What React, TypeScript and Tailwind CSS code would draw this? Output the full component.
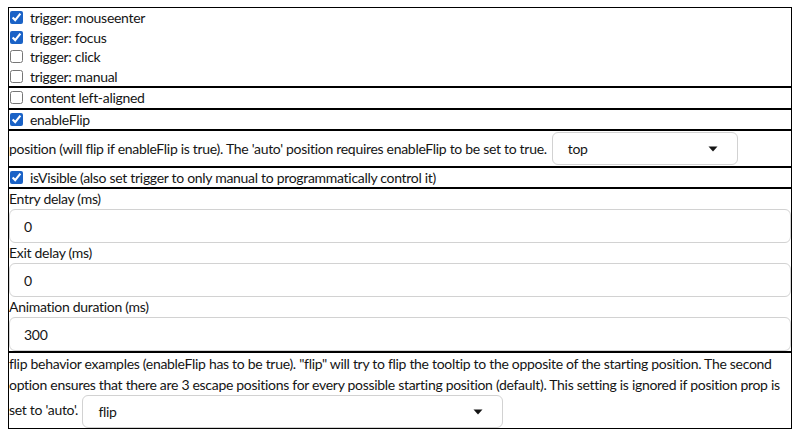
const font = "font-['Lato',sans-serif]";

function Check({ label, checked, h = "h-[19.5px]" }: { label: string; checked?: boolean; h?: string }) {
  return (
    <label className={`flex items-center ${h}`}>
      <input
        type="checkbox"
        defaultChecked={checked}
        className="m-0 ml-px mr-[7px] h-[13px] w-[13px] accent-[#1a62c6]"
      />
      <span>{label}</span>
    </label>
  );
}

function Caret() {
  return (
    <svg width="10" height="6" viewBox="0 0 10 6" className="shrink-0">
      <path d="M0.5 0.5h9L5 5.5z" fill="#151515" />
    </svg>
  );
}

function Select({ value, width }: { value: string; width: string }) {
  return (
    <span
      className={`inline-flex items-center justify-between rounded-md border border-[#d2d2d2] bg-white pl-[15px] pr-[19px] align-middle ${width}`}
    >
      <span>{value}</span>
      <Caret />
    </span>
  );
}

function NumberField({ label, value }: { label: string; value: string }) {
  return (
    <div>
      <div className="h-5 leading-5">{label}</div>
      <div className="flex h-[34px] items-center rounded-md border border-[#d2d2d2] pl-[14px]">
        {value}
      </div>
    </div>
  );
}

export default function App() {
  return (
    <div
      className={`min-h-screen bg-white pt-[7px] pl-2 text-[14px] tracking-[-0.3px] text-[#151515] ${font}`}
    >
      <div className="w-[784px]">
        <div className="border border-black">
          <Check label="trigger: mouseenter" checked />
          <Check label="trigger: focus" checked />
          <Check label="trigger: click" />
          <Check label="trigger: manual" />
        </div>
        <div className="border border-black">
          <Check label="content left-aligned" />
        </div>
        <div className="border border-black">
          <Check label="enableFlip" checked />
        </div>
        <div className="flex items-center gap-[5px] border border-black py-px">
          <span className="whitespace-nowrap">
            position (will flip if enableFlip is true). The 'auto' position requires enableFlip to be set
            to true.
          </span>
          <Select value="top" width="h-[33px] w-[186px] shrink-0" />
        </div>
        <div className="border border-black">
          <Check
            label="isVisible (also set trigger to only manual to programmatically control it)"
            checked
            h="h-[19px]"
          />
        </div>
        <div className="border border-black">
          <NumberField label="Entry delay (ms)" value="0" />
          <NumberField label="Exit delay (ms)" value="0" />
          <NumberField label="Animation duration (ms)" value="300" />
        </div>
        <div className="whitespace-nowrap border border-black leading-[21px]">
          flip behavior examples (enableFlip has to be true). "flip" will try to flip the tooltip to the
          opposite of the starting position. The second
          <br />
          option ensures that there are 3 escape positions for every possible starting position
          (default). This setting is ignored if position prop is
          <br />
          set to 'auto'. <Select value="flip" width="ml-px h-[33px] w-[421px]" />
        </div>
      </div>
    </div>
  );
}
